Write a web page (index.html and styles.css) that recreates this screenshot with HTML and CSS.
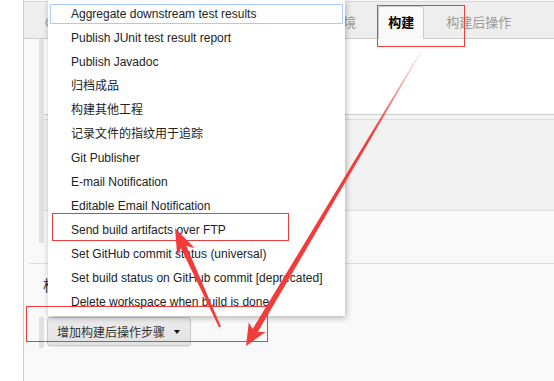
FILE: index.html
```html
<!DOCTYPE html>
<html lang="zh-CN">
<head>
<meta charset="utf-8">
<title>Jenkins 构建后操作</title>
<link rel="stylesheet" href="styles.css">
</head>
<body>
<div class="page">
  <div class="tabbar">
    <div class="tab">General</div>
    <div class="tab">源码管理</div>
    <div class="tab">构建触发器</div>
    <div class="tab">构建环境</div>
    <div class="tab active">构建</div>
    <div class="tab">构建后操作</div>
  </div>

  <div class="section">
    <div class="gutter"></div>
    <div class="strip"></div>
    <div class="panel">
      <div class="panel-top"></div>
      <div class="panel-sep"></div>
      <div class="panel-mid"></div>
      <div class="panel-bottom"></div>
    </div>
  </div>

  <div class="divider"></div>
  <div class="heading">构建后操作</div>
  <div class="btnrow">
    <div class="strip short"></div>
    <button class="addbtn">增加构建后操作步骤<span class="caret"></span></button>
  </div>
</div>

<ul class="menu">
  <li class="focused">Aggregate downstream test results</li>
  <li>Publish JUnit test result report</li>
  <li>Publish Javadoc</li>
  <li>归档成品</li>
  <li>构建其他工程</li>
  <li>记录文件的指纹用于追踪</li>
  <li>Git Publisher</li>
  <li>E-mail Notification</li>
  <li>Editable Email Notification</li>
  <li>Send build artifacts over FTP</li>
  <li>Set GitHub commit status (universal)</li>
  <li>Set build status on GitHub commit [deprecated]</li>
  <li>Delete workspace when build is done</li>
</ul>

<svg class="annot" width="554" height="381" viewBox="0 0 554 381" xmlns="http://www.w3.org/2000/svg">
  <defs>
    <linearGradient id="fade" gradientUnits="userSpaceOnUse" x1="422" y1="50" x2="372" y2="135">
      <stop offset="0" stop-color="#f23c3c" stop-opacity="0.1"/>
      <stop offset="1" stop-color="#f23c3c" stop-opacity="1"/>
    </linearGradient>
  </defs>
  <rect x="377.5" y="5.5" width="87" height="41" fill="none" stroke="#e83e3e" stroke-width="1"/>
  <rect x="52.5" y="213.5" width="236" height="27" fill="none" stroke="#e83e3e" stroke-width="1"/>
  <rect x="26.5" y="306.5" width="241" height="35" fill="none" stroke="#e83e3e" stroke-width="1"/>
  <polygon fill="url(#fade)" points="422.4,50.3 257.8,332.1 265.6,332.1 246,346 248.8,322.2 252.6,329.0 421.6,49.7"/>
  <polygon fill="#f23c3c" points="220.9,326.6 186.4,245.9 194.6,248.0 175,228 177.2,255.9 181.0,248.3 219.1,327.4"/>
</svg>
</body>
</html>
```

FILE: styles.css
```css
html, body {
  margin: 0;
  padding: 0;
}

body {
  width: 554px;
  height: 381px;
  overflow: hidden;
  position: relative;
  background: #ffffff;
  font-family: "Liberation Sans", Arial, "Noto Sans CJK SC", sans-serif;
}

.page {
  margin-left: 23px;
  border-left: 1px solid #cccccc;
  height: 381px;
  background: #f9f9f9;
  padding-top: 1px;
  box-sizing: border-box;
}

/* tabs */
.tabbar {
  display: flex;
  align-items: flex-end;
  gap: 12px;
  height: 36px;
  padding-left: 11px;
  border-top: 1px solid #d8d8d8;
  border-bottom: 1px solid #cccccc;
  background: #eeeeee;
}

.tab {
  padding: 0 10px;
  height: 31px;
  line-height: 31px;
  font-size: 13px;
  color: #9a9a9a;
  white-space: nowrap;
  font-family: "Liberation Sans", Arial, "Noto Sans CJK SC", sans-serif;
}

.tab.active {
  color: #000000;
  font-weight: bold;
  background: #fafafa;
  border: 1px solid #cccccc;
  border-bottom: none;
  border-radius: 4px 4px 0 0;
  margin-bottom: -1px;
  height: 32px;
  padding: 0 9px;
}

/* config section */
.section {
  display: flex;
  height: 204px;
}

.gutter {
  width: 15px;
  background: #f9f9f9;
}

.strip {
  width: 5px;
  background: #e0e0e0;
}

.panel {
  flex: 1;
  display: flex;
  flex-direction: column;
}

.panel-top {
  height: 75px;
  background: #ffffff;
}

.panel-sep {
  height: 4px;
  background: #f5f5f5;
  border-top: 1px solid #cccccc;
  border-bottom: 1px solid #dddddd;
}

.panel-mid {
  height: 90px;
  background: #f2f2f2;
  border-bottom: 1px solid #dddddd;
}

.panel-bottom {
  flex: 1;
  background: #f9f9f9;
}

.divider {
  margin-top: 20px;
  margin-left: 5px;
  border-top: 1px solid #dddddd;
}

.heading {
  margin-top: 12px;
  margin-left: 19px;
  font-size: 15px;
  line-height: 18px;
  color: #333333;
  font-family: "Noto Sans CJK SC", sans-serif;
}

.btnrow {
  display: flex;
  align-items: flex-start;
  gap: 3px;
  margin-top: 23px;
  margin-left: 15px;
}

.strip.short {
  height: 31px;
}

.addbtn {
  display: flex;
  align-items: center;
  height: 29px;
  padding: 0 10px 0 9px;
  border: 1px solid #c9c9c9;
  border-radius: 3px;
  background: linear-gradient(#ececec, #e2e2e2);
  box-shadow: 0 1px 1px rgba(0, 0, 0, 0.08);
  font-family: "Noto Sans CJK SC", sans-serif;
  font-size: 12px;
  color: #333333;
  cursor: pointer;
}

.caret {
  margin-left: 9px;
  width: 0;
  height: 0;
  border-left: 3.5px solid transparent;
  border-right: 3.5px solid transparent;
  border-top: 4px solid #111111;
}

/* dropdown menu */
.menu {
  position: absolute;
  left: 48px;
  top: 0;
  width: 297px;
  height: 316px;
  margin: 0;
  padding: 2px 0;
  box-sizing: border-box;
  list-style: none;
  background: #ffffff;
  box-shadow: 1px 2px 6px rgba(0, 0, 0, 0.28);
}

.menu li {
  height: 24px;
  line-height: 24px;
  padding-left: 23px;
  font-size: 12px;
  color: #222222;
  white-space: nowrap;
  font-family: "Liberation Sans", Arial, "Noto Sans CJK SC", sans-serif;
}

.menu li.focused {
  outline: 1.5px solid #a9c9fb;
  outline-offset: -3px;
  border-radius: 3px;
}

.annot {
  position: absolute;
  left: 0;
  top: 0;
  pointer-events: none;
}
```
